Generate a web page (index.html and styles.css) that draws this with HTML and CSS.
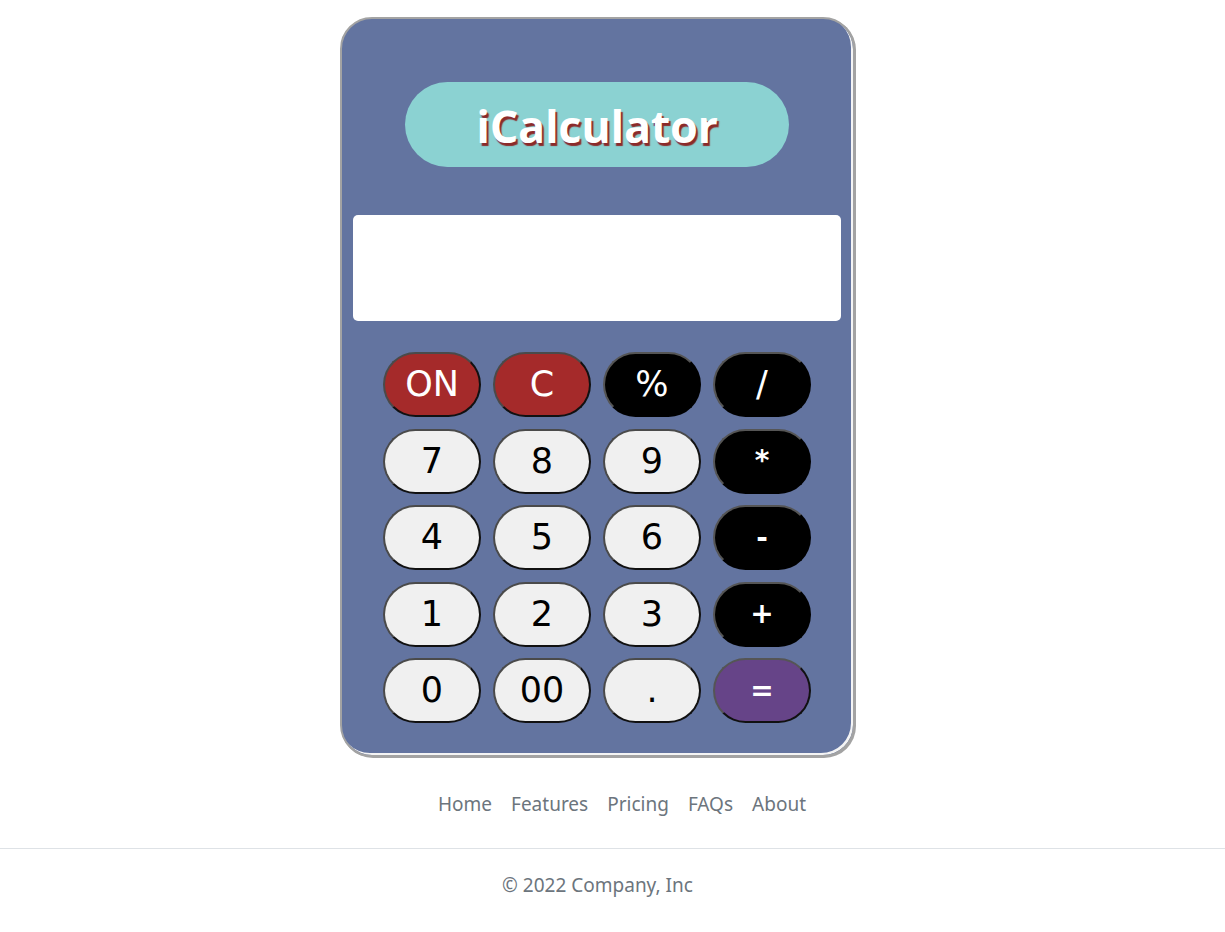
FILE: index.html
```html
<!DOCTYPE html>
<html lang="en">
<head>
<meta charset="utf-8">
<title>iCalculator</title>
<link rel="stylesheet" href="styles.css">
</head>
<body>
<main class="main">
  <div class="calculator">
    <div class="title-wrap">
      <h1 class="title">iCalculator</h1>
    </div>
    <div class="display"></div>
    <div class="keys">
      <button class="key key-red">ON</button>
      <button class="key key-red">C</button>
      <button class="key key-op">%</button>
      <button class="key key-op">/</button>
      <button class="key">7</button>
      <button class="key">8</button>
      <button class="key">9</button>
      <button class="key key-op key-small">*</button>
      <button class="key">4</button>
      <button class="key">5</button>
      <button class="key">6</button>
      <button class="key key-op key-small">-</button>
      <button class="key">1</button>
      <button class="key">2</button>
      <button class="key">3</button>
      <button class="key key-op key-small">+</button>
      <button class="key">0</button>
      <button class="key">00</button>
      <button class="key">.</button>
      <button class="key key-eq key-small">=</button>
    </div>
  </div>
</main>
<footer class="footer">
  <ul class="nav">
    <li><a href="#" class="nav-link">Home</a></li>
    <li><a href="#" class="nav-link">Features</a></li>
    <li><a href="#" class="nav-link">Pricing</a></li>
    <li><a href="#" class="nav-link">FAQs</a></li>
    <li><a href="#" class="nav-link">About</a></li>
  </ul>
  <p class="copy">© 2022 Company, Inc</p>
</footer>
</body>
</html>
```
FILE: styles.css
```css
html, body {
  margin: 0;
  padding: 0;
  background: #ffffff;
}
body {
  font-family: "Noto Sans", "Open Sans", sans-serif;
}
.main {
  padding: 17px 30px 0 0;
  display: flex;
  justify-content: center;
}
.calculator {
  box-sizing: border-box;
  width: 515px;
  height: 740px;
  background: #6374a0;
  border: 2px solid #a3a3a3;
  border-radius: 32px;
  box-shadow: inset -2px -2px 0 #f4f4f4, 1px 1px 0 #a3a3a3;
  padding: 63px 12px 0 11px;
  display: flex;
  flex-direction: column;
  align-items: center;
}
.title-wrap {
  width: 384px;
  height: 85px;
  border-radius: 43px;
  background: #8bd2d2;
  display: flex;
  align-items: center;
  justify-content: center;
}
.title {
  margin: 0;
  font-family: "Open Sans", "Noto Sans", sans-serif;
  font-weight: 700;
  font-size: 45px;
  letter-spacing: -0.3px;
  color: #ffffff;
  text-shadow: 2px 3px 1px #8b2a2a;
  line-height: 1;
  padding-top: 2px;
}
.display {
  margin-top: 48px;
  width: 488px;
  height: 106px;
  background: #ffffff;
  border-radius: 5px;
}
.keys {
  margin-top: 31px;
  display: grid;
  grid-template-columns: repeat(4, 98px);
  grid-auto-rows: 65px;
  column-gap: 12px;
  row-gap: 11.5px;
}
.key {
  box-sizing: border-box;
  margin: 0;
  padding: 0;
  border-style: solid;
  border-width: 2px;
  border-color: #4a4a4a #111111 #111111 #4a4a4a;
  border-radius: 33px;
  background: #f0f0f0;
  color: #000000;
  font-family: "DejaVu Sans", sans-serif;
  font-size: 35px;
  line-height: 1;
}
.key-red {
  background: #a52a2a;
  color: #ffffff;
}
.key-op {
  background: #000000;
  color: #ffffff;
  border-color: #555555 #000000 #000000 #555555;
}
.key-eq {
  background: #664488;
  color: #ffffff;
  border-color: #555555 #111111 #111111 #555555;
}
.key-small {
  font-size: 28px;
  font-weight: 700;
}
.footer {
  margin-top: 26px;
}
.nav {
  list-style: none;
  margin: 0;
  padding: 0 0 23px 19px;
  display: flex;
  justify-content: center;
  border-bottom: 1px solid #dee2e6;
}
.nav-link {
  display: block;
  padding: 8px 9.5px;
  font-size: 19px;
  color: #6c757d;
  text-decoration: none;
}
.copy {
  margin: 23px 30px 0 0;
  text-align: center;
  font-size: 19px;
  color: #6c757d;
}
```
